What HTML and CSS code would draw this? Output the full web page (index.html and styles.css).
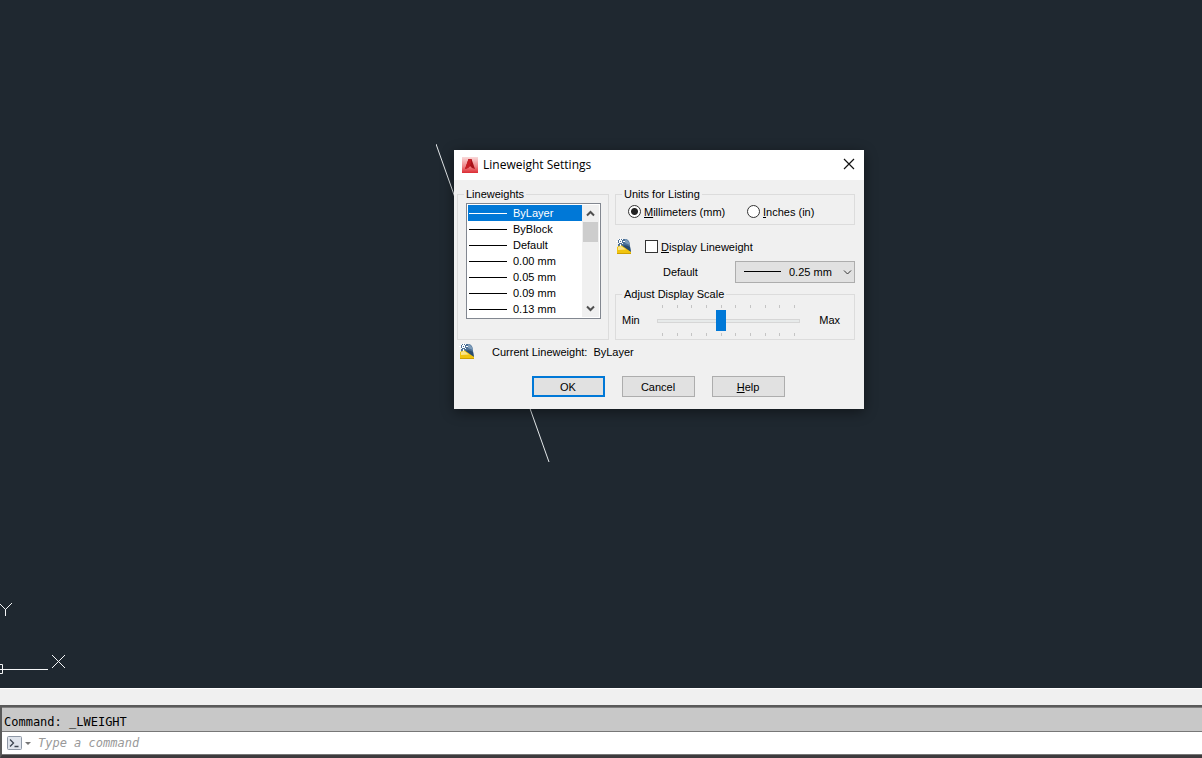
FILE: index.html
```html
<!doctype html>
<html lang="en">
<head>
	<meta charset="UTF-8">
	<title>Lineweight Settings</title>
	<link rel="stylesheet" href="styles.css">
</head>
<body>
	<svg class="defs" aria-hidden="true">
		<symbol id="dwg" viewBox="0 0 16 17">
			<path d="M2 1h8q4 1 4 7l1 6L2 9z" fill="#4a6f96"/>
			<path d="M9 1q4 1 5 6l-5-2z" fill="#7d9cba"/>
			<path d="M6 8q4-2 8 1l1 6z" fill="#2b4c70"/>
			<path d="M1 9l4-2 10 7v2H1z" fill="#f1c40f"/>
			<path d="M2 9l3-1 5 3.500L2 12z" fill="#fbe58a"/>
			<path d="M1 15h14v1H1z" fill="#cfa000"/>
			<path d="M4 0h1v2H4zM4 6h1v2H4zM0 3h2v1H0zM7 3h2v1H7zM3 2h3v3H3zM2 1h1v1H2zM6 1h1v1H6zM2 5h1v1H2zM6 5h1v1H6z" fill="#fff"/>
			<path d="M4 3h1v1H4z" fill="#4a6f96"/>
		</symbol>
	</svg>
	<main class="canvas">
		<svg class="line" width="114" height="319"><path d="M0 0L113 318" stroke="#e4e8ea" fill="none"/></svg>
		<svg class="ucs" width="70" height="88" fill="none" stroke="#f4f6f7">
			<path d="M-1 3L5.500 9.500L12 3M5.500 9v7"/>
			<path d="M52 55L65 68M65 55L52 68"/>
			<path d="M-5 64.500H2.500V73.500H-5M0 69.500H48"/>
		</svg>
		<form class="dialog" onsubmit="return false">
			<header class="title">
				<svg width="16" height="16" viewBox="0 0 16 16">
					<defs>
						<linearGradient id="red" x1="0" y1="0" x2="0" y2="1"><stop offset="0" stop-color="#f9dada"/><stop offset=".6" stop-color="#ee8285"/><stop offset="1" stop-color="#dc2c33"/></linearGradient>
					</defs>
					<path d="M0 0h16v16H0z" fill="url(#red)"/>
					<path d="M6.500 2h3L13 12l-3-1-2-2-2 2-3 1z" fill="#a81219"/>
					<path d="M6.500 2h3L8 9l-2 2-3 1z" fill="#c81e25"/>
				</svg>
				<h1>Lineweight Settings</h1>
				<button type="button" class="close" aria-label="Close"><svg width="12" height="12"><path d="M1 1L11 11M11 1L1 11" stroke="#111" stroke-width="1.200"/></svg></button>
			</header>
			<div class="cols">
				<fieldset class="weights">
					<legend><label for="list">Lineweights</label></legend>
					<div class="listbox">
						<select id="list" size="7">
							<option selected>ByLayer</option>
							<option>ByBlock</option>
							<option>Default</option>
							<option>0.00 mm</option>
							<option>0.05 mm</option>
							<option>0.09 mm</option>
							<option>0.13 mm</option>
						</select>
						<div class="scroll">
							<button type="button" aria-label="Scroll up"><svg width="9" height="7"><path d="M1 5.500L4.500 2L8 5.500"/></svg></button>
							<div class="thumb"></div>
							<button type="button" aria-label="Scroll down"><svg width="9" height="7"><path d="M1 1.500L4.500 5L8 1.500"/></svg></button>
						</div>
					</div>
				</fieldset>
				<div class="options">
					<fieldset class="units">
						<legend>Units for Listing</legend>
						<label><input type="radio" name="unit" checked><span><u>M</u>illimeters (mm)</span></label>
						<label><input type="radio" name="unit"><span><u>I</u>nches (in)</span></label>
					</fieldset>
					<div class="display">
						<svg width="16" height="17"><use href="#dwg"/></svg>
						<label><input type="checkbox"><span><u>D</u>isplay Lineweight</span></label>
					</div>
					<div class="default">
						<label for="default">Default</label>
						<div class="combo">
							<select id="default"><option>0.25 mm</option></select>
							<svg width="9" height="7"><path d="M1 1.500L4.500 5L8 1.500"/></svg>
						</div>
					</div>
					<fieldset class="scale">
						<legend><label for="scale">Adjust Display Scale</label></legend>
						<span>Min</span>
						<div class="slider">
							<div class="ticks"><i></i><i></i><i></i><i></i><i></i><i></i><i></i><i></i><i></i><i></i></div>
							<input type="range" id="scale" min="0" max="9" value="4">
							<div class="ticks"><i></i><i></i><i></i><i></i><i></i><i></i><i></i><i></i><i></i><i></i></div>
						</div>
						<span>Max</span>
					</fieldset>
				</div>
			</div>
			<div class="current">
				<svg width="16" height="17"><use href="#dwg"/></svg>
				<span class="name">Current Lineweight:</span>
				<span>ByLayer</span>
			</div>
			<div class="buttons">
				<button class="ok">OK</button>
				<button type="button">Cancel</button>
				<button type="button"><u>H</u>elp</button>
			</div>
		</form>
	</main>
	<div class="strip"></div>
	<section class="command">
		<p>Command: _LWEIGHT</p>
		<div class="prompt">
			<button type="button" aria-label="Recent commands">
				<svg width="24" height="14">
					<rect x=".5" y=".5" width="14" height="13" rx="1" fill="#dfe4ec" stroke="#8f98a6"/>
					<path d="M3 3.500L6.500 7L3 10.500M7.500 10.500h4" fill="none" stroke="#3c4450" stroke-width="1.300"/>
					<path d="M18 6h6l-3 3z" fill="#777"/>
				</svg>
			</button>
			<input type="text" placeholder="Type a command" aria-label="Type a command">
		</div>
	</section>
</body>
</html>
```

FILE: styles.css
```css
*{
	box-sizing: border-box;
}
body{
	margin: 0;
	height: 100vh;
	display: flex;
	flex-direction: column;
	overflow: hidden;
	font: 12px/14px "Liberation Sans", Arial, sans-serif;
	color: #000;
}
p,h1,fieldset,legend,input{
	margin: 0;
	padding: 0;
}
button,input,select{
	font: inherit;
	color: inherit;
}
svg{
	display: block;
	flex: none;
}
.defs{
	position: absolute;
	width: 0;
	height: 0;
}
.canvas{
	flex: 1;
	position: relative;
	background: #1f2830;
}
.line{
	position: absolute;
	left: 436px;
	top: 144px;
}
.ucs{
	position: absolute;
	left: 0;
	bottom: 0;
}

/* dialog */
.dialog{
	position: absolute;
	left: 454px;
	top: 150px;
	width: 410px;
	padding-bottom: 12px;
	background: #f0f0f0;
	box-shadow: 0 3px 12px rgba(0,0,0,.45);
	font-size: 11px;
}
.title{
	display: flex;
	align-items: center;
	gap: 5px;
	height: 30px;
	padding: 0 9px 0 8px;
	background: #fff;
}
.title h1{
	flex: 1;
	font: 12px/16px "Open Sans", "Noto Sans", sans-serif;
}
.close{
	padding: 0 0 2px;
	border: 0;
	background: none;
}
.cols{
	display: flex;
	gap: 6px;
	padding: 7px 9px 0 3px;
}
fieldset{
	min-width: 0;
	padding-left: 6px;
	border: 1px solid #dcdcdc;
}
legend{
	padding: 0 2px;
}
.weights{
	width: 152px;
	padding: 2px 7px 20px 6px;
}
.listbox{
	display: flex;
	height: 116px;
	margin-left: 2px;
	padding: 1px;
	border: 1px solid #828790;
	background: #fff;
}
.listbox select{
	flex: 1;
	min-width: 0;
	padding: 0;
	border: 0;
	border-radius: 0;
	outline: 0;
	background: #fff;
	overflow: hidden;
	scrollbar-width: none;
}
.listbox option{
	height: 16px;
	min-height: 16px;
	padding: 2px 0 0 45px;
	border-radius: 0;
	line-height: 14px;
	background: linear-gradient(#000,#000) 1px 8px/38px 1px no-repeat;
}
.listbox option:checked{
	background: linear-gradient(#fff,#fff) 1px 8px/38px 1px no-repeat, linear-gradient(#0078d7,#0078d7);
	-webkit-text-fill-color: #fff;
}
.scroll{
	display: flex;
	flex-direction: column;
	width: 17px;
	background: #f0f0f0;
}
.scroll button{
	display: flex;
	align-items: center;
	justify-content: center;
	height: 17px;
	padding: 0;
	border: 0;
	background: none;
}
.scroll button:last-child{
	margin-top: auto;
}
.scroll path{
	fill: none;
	stroke: #505050;
	stroke-width: 2;
}
.thumb{
	height: 20px;
	margin: 0 1px;
	background: #cdcdcd;
}
.options{
	flex: 1;
	display: flex;
	flex-direction: column;
}
.options label{
	display: flex;
	align-items: center;
}
.units{
	display: grid;
	grid-template-columns: 119px 1fr;
	height: 38px;
	padding-top: 3px;
}
.units label{
	height: 15px;
	margin-left: 6px;
}
input[type=radio],input[type=checkbox]{
	appearance: none;
	flex: none;
	width: 13px;
	height: 13px;
	margin-right: 3px;
	border: 1px solid #333;
	background: #fff;
}
input[type=radio]{
	border-radius: 50%;
}
input[type=radio]:checked{
	background: radial-gradient(#222 3px,#fff 4px);
}
.display{
	display: flex;
	align-items: center;
	gap: 13px;
	height: 17px;
	margin: 13px 0 6px 1px;
}
.default{
	display: flex;
	align-items: center;
	justify-content: space-between;
	padding-left: 48px;
}
.combo{
	position: relative;
	width: 120px;
}
.combo select{
	appearance: none;
	display: block;
	width: 100%;
	height: 22px;
	padding: 0 0 0 53px;
	border: 1px solid #adadad;
	border-radius: 0;
	background: linear-gradient(#000,#000) 8px 9px/37px 1px no-repeat #e1e1e1;
}
.combo svg{
	position: absolute;
	right: 3px;
	top: 8px;
	fill: none;
	stroke: #333;
	pointer-events: none;
}
.scale{
	display: flex;
	height: 53px;
	margin-top: 4px;
	padding: 4px 14px 0 6px;
}
.scale > span{
	width: 35px;
	margin-top: 8px;
}
.scale > span:last-child{
	width: auto;
	margin-left: auto;
}
.slider{
	width: 143px;
}
.ticks{
	display: flex;
	justify-content: space-between;
	padding: 0 5px;
}
.ticks i{
	width: 1px;
	height: 3px;
	background: #c4c4c4;
}
input[type=range]{
	appearance: none;
	display: block;
	width: 100%;
	height: 21px;
	margin: 2px 0;
	background: none;
}
input[type=range]::-webkit-slider-runnable-track{
	height: 4px;
	border: 1px solid #d6d6d6;
	background: #e7eaea;
}
input[type=range]::-webkit-slider-thumb{
	appearance: none;
	width: 10px;
	height: 21px;
	margin-top: -10px;
	background: #0078d7;
}
.current{
	display: flex;
	align-items: center;
	gap: 6px;
	margin: 3px 0 0 5px;
}
.current .name{
	margin-left: 11px;
}
.buttons{
	display: flex;
	justify-content: center;
	gap: 17px;
	margin-top: 16px;
	padding-right: 2px;
}
.buttons button{
	width: 73px;
	height: 21px;
	padding: 0;
	border: 1px solid #adadad;
	background: #e1e1e1;
}
.buttons .ok{
	border: 2px solid #0078d7;
}

/* command line */
.strip{
	height: 17px;
	border-top: 1px solid #fff;
	background: #f0f0f0;
}
.command{
	border-top: 2px solid #5a5a5a;
	border-bottom: 3px solid #3d3a3d;
	border-left: 2px solid #5a5a5a;
	font: 12px/14px "DejaVu Sans Mono", monospace;
}
.command p{
	height: 24px;
	padding: 7px 2px 0;
	border-top: 1px solid #808080;
	background: #c8c8c8;
}
.prompt{
	display: flex;
	align-items: center;
	height: 24px;
	padding-left: 5px;
	border-top: 1px solid #777;
	border-bottom: 1px solid #777;
	background: #fff;
}
.prompt button{
	padding: 0;
	border: 0;
	background: none;
}
.prompt input{
	flex: 1;
	margin-left: 7px;
	border: 0;
	outline: 0;
	font-style: italic;
}
.prompt input::placeholder{
	color: #999;
}
```
